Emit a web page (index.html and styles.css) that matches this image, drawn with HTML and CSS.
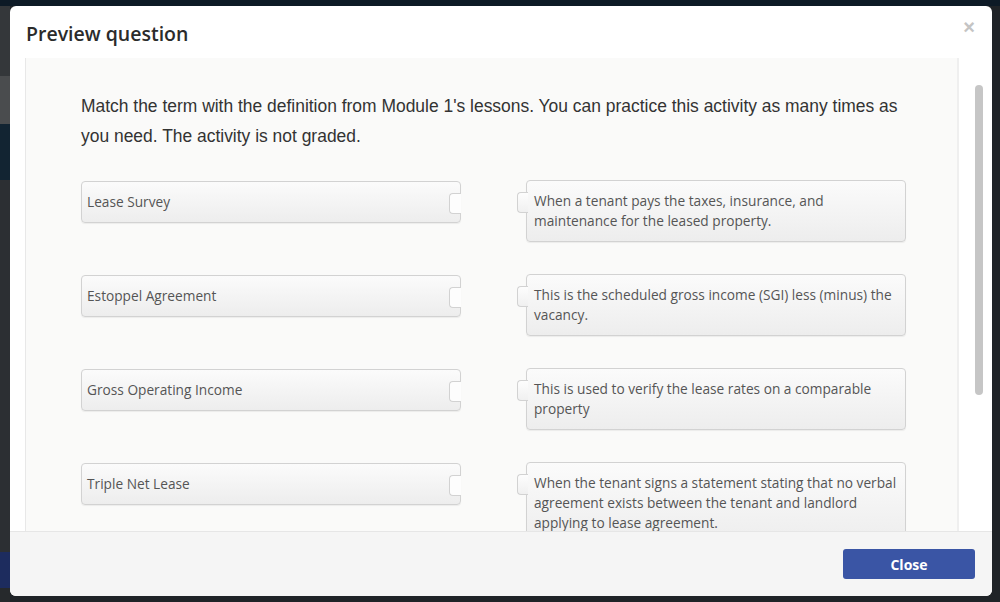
FILE: index.html
```html
<!DOCTYPE html>
<html>
<head>
<meta charset="utf-8">
<link rel="stylesheet" href="styles.css">
</head>
<body>
<div class="backdrop">
  <div class="side-left">
    <div class="band b1"></div>
    <div class="band b2"></div>
    <div class="band b3"></div>
    <div class="band b4"></div>
    <div class="band b5"></div>
    <div class="band b6"></div>
  </div>
  <div class="modal">
    <div class="modal-header">
      <h1 class="title">Preview question</h1>
      <span class="close-x">×</span>
    </div>
    <div class="modal-body">
      <div class="panel">
        <p class="prompt">Match the term with the definition from Module 1's lessons. You can practice this activity as many times as you need. The activity is not graded.</p>
        <div class="rows">
          <div class="row">
            <div class="term">Lease Survey<span class="socket"></span></div>
            <div class="def"><span class="plug"></span>When a tenant pays the taxes, insurance, and maintenance for the leased property.</div>
          </div>
          <div class="row">
            <div class="term">Estoppel Agreement<span class="socket"></span></div>
            <div class="def"><span class="plug"></span>This is the scheduled gross income (SGI) less (minus) the vacancy.</div>
          </div>
          <div class="row">
            <div class="term">Gross Operating Income<span class="socket"></span></div>
            <div class="def"><span class="plug"></span>This is used to verify the lease rates on a comparable property</div>
          </div>
          <div class="row">
            <div class="term">Triple Net Lease<span class="socket"></span></div>
            <div class="def"><span class="plug"></span>When the tenant signs a statement stating that no verbal agreement exists between the tenant and landlord applying to lease agreement.</div>
          </div>
        </div>
      </div>
      <div class="gutter"></div>
      <div class="scroll-track"><div class="scroll-thumb"></div></div>
    </div>
    <div class="modal-footer">
      <button class="btn-close">Close</button>
    </div>
  </div>
</div>
</body>
</html>
```
FILE: styles.css
```css
html, body {
  margin: 0;
  padding: 0;
  width: 1000px;
  height: 602px;
  overflow: hidden;
}
body {
  background: #202428;
  font-family: "Open Sans", "Liberation Sans", sans-serif;
}
.backdrop {
  position: relative;
  width: 1000px;
  height: 602px;
  background: linear-gradient(#0d1a26 0 6px, #1f2327 6px);
}
.side-left {
  position: absolute;
  left: 0;
  top: 6px;
  width: 10px;
  height: 596px;
  display: flex;
  flex-direction: column;
}
.band { width: 10px; }
.b1 { height: 70px; background: #34373a; }
.b2 { height: 48px; background: #4a4c4e; }
.b3 { height: 56px; background: #122432; }
.b4 { height: 372px; background: #2c2f33; }
.b5 { height: 36px; background: #1d2c5e; }
.b6 { flex: 1; background: #26292c; }

.modal {
  position: absolute;
  left: 10px;
  top: 6px;
  width: 982px;
  height: 590px;
  background: #fff;
  border-radius: 6px;
  overflow: hidden;
  display: flex;
  flex-direction: column;
}
.modal-header {
  height: 52px;
  flex: none;
  display: flex;
  align-items: center;
  justify-content: space-between;
  padding: 0 16px;
  box-sizing: border-box;
}
.title {
  margin: 0;
  font-size: 19.5px;
  font-weight: 600;
  color: #2b2b2b;
  position: relative;
  top: 1px;
}
.close-x {
  font-family: "Liberation Sans", sans-serif;
  font-size: 20px;
  font-weight: bold;
  color: #c4c4c4;
  margin-right: 1px;
  position: relative;
  top: -5px;
}
.modal-body {
  flex: 1;
  display: flex;
  overflow: hidden;
  padding-left: 15px;
}
.panel {
  width: 934px;
  flex: none;
  background: #fafaf9;
  border-left: 1px solid #e8e8e8;
  border-right: 2px solid #efefef;
  box-sizing: border-box;
  padding: 33px 51px 0 55px;
  overflow: hidden;
}
.gutter {
  width: 16px;
  flex: none;
}
.scroll-track {
  width: 9px;
  flex: none;
  padding-top: 27px;
}
.scroll-thumb {
  width: 8px;
  height: 310px;
  background: #c6c6c6;
  border-radius: 4px;
}
.prompt {
  margin: 0 0 29px;
  font-family: "Liberation Sans", Arial, sans-serif;
  font-size: 17.45px;
  line-height: 30px;
  color: #333;
}
.rows {
  display: flex;
  flex-direction: column;
  gap: 32px;
}
.row {
  display: flex;
  justify-content: space-between;
  align-items: flex-start;
}
.term, .def {
  position: relative;
  width: 380px;
  box-sizing: border-box;
  border: 1px solid #d2d2d2;
  border-radius: 4px;
  background: linear-gradient(#fbfbfb, #ededed);
  box-shadow: 0 1px 1px rgba(0,0,0,0.06);
  font-size: 13.7px;
  line-height: 20px;
  color: #555;
}
.term {
  margin-top: 1px;
  padding: 10px 12px 10px 5px;
}
.def {
  padding: 10px 3px 10px 7px;
}
.socket {
  position: absolute;
  right: -1px;
  top: 11px;
  width: 11px;
  height: 19px;
  background: #fdfdfd;
  border: 1px solid #d2d2d2;
  border-right: none;
  border-radius: 4px 0 0 4px;
}
.plug {
  position: absolute;
  left: -10px;
  top: 11px;
  width: 10px;
  height: 19px;
  background: linear-gradient(#fdfdfd, #f0f0f0);
  border: 1px solid #d2d2d2;
  border-right: none;
  border-radius: 4px 0 0 4px;
}
.modal-footer {
  height: 65px;
  flex: none;
  background: #f5f5f5;
  border-top: 1px solid #e6e6e6;
  box-sizing: border-box;
  display: flex;
  justify-content: flex-end;
  align-items: flex-start;
  padding: 17px 17px 0 0;
}
.btn-close {
  width: 132px;
  height: 30px;
  border: none;
  border-radius: 3px;
  background: #3a55a5;
  color: #fff;
  font-family: "Open Sans", sans-serif;
  font-size: 14px;
  font-weight: 700;
  padding: 0;
}
```
